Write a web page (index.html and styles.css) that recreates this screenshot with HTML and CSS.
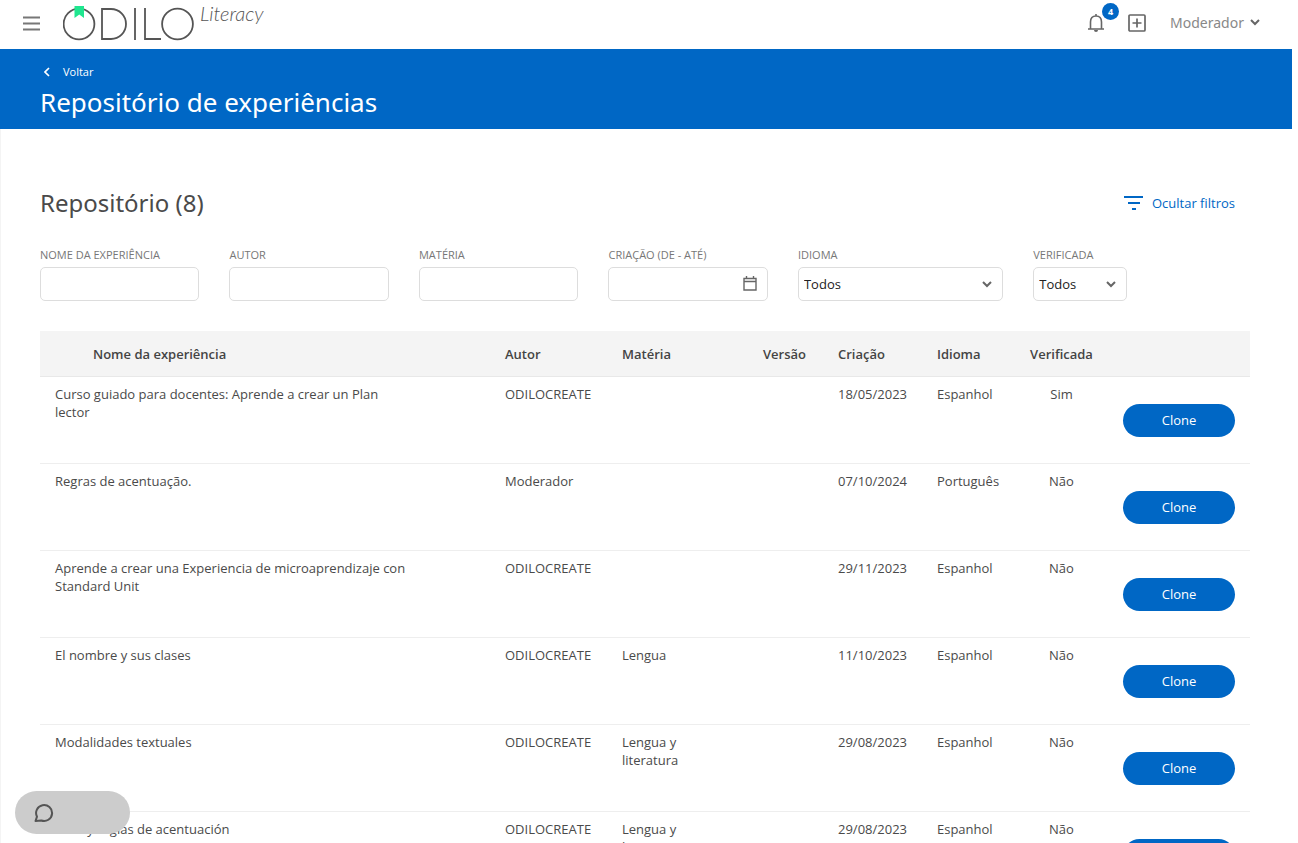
FILE: index.html
```html
<!DOCTYPE html>
<html lang="pt">
<head>
    <meta charset="UTF-8">
    <meta name="viewport" content="width=device-width, initial-scale=1.0">
    <title>Repositório de experiências</title>
    <link rel="stylesheet" href="styles.css">
</head>
<body>
    <div class="page">
        <header class="topbar">
            <button class="icon-btn menu-btn" type="button" aria-label="Menu">
                <svg width="18" height="16" viewBox="0 0 18 16" fill="none" stroke="#777" stroke-width="1.800"><path d="M1 2.500h17M1 8.500h17M1 14.500h17"/></svg>
            </button>
            <a class="logo" href="#" aria-label="Odilo Literacy">
                <svg width="132" height="38" viewBox="0 0 132 38" fill="none" stroke="#555" stroke-width="1.800">
                    <circle cx="16" cy="20" r="15.400"/>
                    <path d="M39 5h9a15 15 0 0 1 0 30h-9z"/>
                    <path d="M72 4v32M82 4v31h16"/>
                    <circle cx="114.500" cy="20" r="15.400"/>
                    <path d="M11.500 2h9.500v12l-4.700-3.500-4.800 3.500z" fill="#1fe68f" stroke="none"/>
                </svg>
                <span class="logo-text">Literacy</span>
            </a>
            <div class="topbar-right">
                <button class="icon-btn bell-btn" type="button" aria-label="Notificações">
                    <svg width="18" height="20" viewBox="0 0 18 20" fill="none" stroke="#666" stroke-width="1.600"><path d="M1 16h16M3.500 16V9c0-3.500 2-6 5.500-6s5.500 2.500 5.500 6v7M9 3V1"/><path d="M7 17a2 2 0 0 0 4 0z" fill="#666" stroke="none"/></svg>
                    <span class="badge">4</span>
                </button>
                <button class="icon-btn add-btn" type="button" aria-label="Adicionar">
                    <svg width="18" height="18" viewBox="0 0 18 18" fill="none" stroke="#666" stroke-width="1.700"><rect x="1" y="1" width="16" height="16" rx="1"/><path d="M9 4.500v9M4.500 9h9"/></svg>
                </button>
                <button class="user-btn" type="button">
                    Moderador
                    <svg width="10" height="7" viewBox="0 0 10 7" fill="none" stroke="#666" stroke-width="2"><path d="M1 1l4 4 4-4"/></svg>
                </button>
            </div>
        </header>

        <div class="banner">
            <a class="back" href="#">
                <svg width="6" height="10" viewBox="0 0 6 10" fill="none" stroke="#fff" stroke-width="1.700"><path d="M5 1L1 5l4 4"/></svg>
                Voltar
            </a>
            <h1>Repositório de experiências</h1>
        </div>

        <main class="content">
            <div class="content-header">
                <h2>Repositório (8)</h2>
                <button class="filter-toggle" type="button">
                    <svg width="19" height="14" viewBox="0 0 19 14" fill="none" stroke="#0067c5" stroke-width="2"><path d="M0 1h19M4 7h12M8 13h4"/></svg>
                    Ocultar filtros
                </button>
            </div>

            <form class="filters">
                <div class="field">
                    <label for="nome">Nome da experiência</label>
                    <input id="nome" type="text">
                </div>
                <div class="field">
                    <label for="autor">Autor</label>
                    <input id="autor" type="text">
                </div>
                <div class="field">
                    <label for="materia">Matéria</label>
                    <input id="materia" type="text">
                </div>
                <div class="field">
                    <label for="criacao">Criação (de - até)</label>
                    <div class="control">
                        <input id="criacao" type="text">
                        <svg class="calendar" width="14" height="15" viewBox="0 0 14 15" fill="none" stroke="#666" stroke-width="1.400"><path d="M1 2.500h12v11.500H1zM1 5.500h12M3.500 0v2M10.500 0v2"/></svg>
                    </div>
                </div>
                <div class="field">
                    <label for="idioma">Idioma</label>
                    <div class="control">
                        <select id="idioma"><option>Todos</option></select>
                        <svg class="arrow" width="10" height="7" viewBox="0 0 10 7" fill="none" stroke="#666" stroke-width="2"><path d="M1 1l4 4 4-4"/></svg>
                    </div>
                </div>
                <div class="field">
                    <label for="verificada">Verificada</label>
                    <div class="control">
                        <select id="verificada"><option>Todos</option></select>
                        <svg class="arrow" width="10" height="7" viewBox="0 0 10 7" fill="none" stroke="#666" stroke-width="2"><path d="M1 1l4 4 4-4"/></svg>
                    </div>
                </div>
            </form>

            <table class="experiences">
                <colgroup>
                    <col>
                    <col class="col-author">
                    <col class="col-subject">
                    <col class="col-version">
                    <col class="col-date">
                    <col class="col-language">
                    <col class="col-verified">
                    <col class="col-action">
                </colgroup>
                <thead>
                    <tr>
                        <th class="name">Nome da experiência</th>
                        <th>Autor</th>
                        <th>Matéria</th>
                        <th>Versão</th>
                        <th>Criação</th>
                        <th>Idioma</th>
                        <th class="verified">Verificada</th>
                        <th></th>
                    </tr>
                </thead>
                <tbody>
                    <tr>
                        <td class="name">Curso guiado para docentes: Aprende a crear un Plan lector</td>
                        <td>ODILOCREATE</td>
                        <td></td>
                        <td></td>
                        <td>18/05/2023</td>
                        <td>Espanhol</td>
                        <td class="verified">Sim</td>
                        <td class="action"><button class="btn" type="button">Clone</button></td>
                    </tr>
                    <tr>
                        <td class="name">Regras de acentuação.</td>
                        <td>Moderador</td>
                        <td></td>
                        <td></td>
                        <td>07/10/2024</td>
                        <td>Português</td>
                        <td class="verified">Não</td>
                        <td class="action"><button class="btn" type="button">Clone</button></td>
                    </tr>
                    <tr>
                        <td class="name">Aprende a crear una Experiencia de microaprendizaje con Standard Unit</td>
                        <td>ODILOCREATE</td>
                        <td></td>
                        <td></td>
                        <td>29/11/2023</td>
                        <td>Espanhol</td>
                        <td class="verified">Não</td>
                        <td class="action"><button class="btn" type="button">Clone</button></td>
                    </tr>
                    <tr>
                        <td class="name">El nombre y sus clases</td>
                        <td>ODILOCREATE</td>
                        <td>Lengua</td>
                        <td></td>
                        <td>11/10/2023</td>
                        <td>Espanhol</td>
                        <td class="verified">Não</td>
                        <td class="action"><button class="btn" type="button">Clone</button></td>
                    </tr>
                    <tr>
                        <td class="name">Modalidades textuales</td>
                        <td>ODILOCREATE</td>
                        <td>Lengua y literatura</td>
                        <td></td>
                        <td>29/08/2023</td>
                        <td>Espanhol</td>
                        <td class="verified">Não</td>
                        <td class="action"><button class="btn" type="button">Clone</button></td>
                    </tr>
                    <tr>
                        <td class="name">Tilde y reglas de acentuación</td>
                        <td>ODILOCREATE</td>
                        <td>Lengua y literatura</td>
                        <td></td>
                        <td>29/08/2023</td>
                        <td>Espanhol</td>
                        <td class="verified">Não</td>
                        <td class="action"><button class="btn" type="button">Clone</button></td>
                    </tr>
                </tbody>
            </table>
        </main>
    </div>

    <button class="chat-btn" type="button" aria-label="Chat">
        <svg width="20" height="20" viewBox="0 0 20 20" fill="none" stroke="#555" stroke-width="2"><path d="M1.500 18l1.500-4.300a8 8 0 1 1 4.300 3.800z" stroke-linejoin="round"/></svg>
    </button>
</body>
</html>
```
FILE: styles.css
```css
/* Base styles */
* {
    box-sizing: border-box;
}

body {
    font-family: 'Open Sans', 'Noto Sans', sans-serif;
    font-size: 13px;
    line-height: 18px;
    color: #4a4a4a;
    background-color: #fff;
    margin: 0;
}

button, input, select {
    font-family: inherit;
    font-size: inherit;
}

button {
    border: none;
    background: none;
    padding: 0;
    cursor: pointer;
}

a {
    text-decoration: none;
}

svg {
    display: block;
}

.page {
    height: 100vh;
    overflow: hidden;
    margin-right: 6px;
}

/* Top bar */
.topbar {
    display: flex;
    align-items: center;
    height: 49px;
    padding: 0 32px 4px 22px;
}

.logo {
    display: flex;
    align-items: flex-start;
    gap: 5px;
    margin-left: 23px;
}

.logo-text {
    font-family: Lato, sans-serif;
    font-size: 20px;
    font-style: italic;
    font-weight: 300;
    color: #555;
}

.topbar-right {
    display: flex;
    align-items: center;
    margin-left: auto;
}

.bell-btn {
    position: relative;
}

.badge {
    position: absolute;
    top: -10px;
    right: -14px;
    width: 17px;
    height: 17px;
    border-radius: 50%;
    background-color: #0067c5;
    color: #fff;
    font-size: 9px;
    font-weight: 700;
    line-height: 17px;
}

.add-btn {
    margin-left: 23px;
}

.user-btn {
    display: flex;
    align-items: center;
    gap: 6px;
    margin-left: 24px;
    font-family: 'Noto Sans', sans-serif;
    font-size: 14px;
    color: #888;
}

/* Banner */
.banner {
    height: 80px;
    padding: 14px 40px 0;
    background-color: #0067c5;
    color: #fff;
}

.back {
    display: inline-flex;
    align-items: center;
    gap: 13px;
    padding-left: 4px;
    font-size: 11px;
    font-weight: 500;
    color: #fff;
}

.banner h1 {
    margin: 3px 0 0;
    font-family: 'Noto Sans', sans-serif;
    font-size: 26px;
    font-weight: 400;
    line-height: 36px;
}

/* Content */
.content {
    padding: 56px 42px 0 39px;
    border-left: 1px solid #f4f4f4;
}

.content-header {
    display: flex;
    align-items: center;
    justify-content: space-between;
    padding-right: 15px;
}

.content-header h2 {
    margin: 0;
    font-family: 'Noto Sans', sans-serif;
    font-size: 24px;
    font-weight: 400;
    line-height: 36px;
}

.filter-toggle {
    display: flex;
    align-items: center;
    gap: 9px;
    color: #0067c5;
}

/* Filters */
.filters {
    display: grid;
    grid-template-columns: repeat(4, 160fr) 206fr 94fr;
    gap: 30px;
    margin: 25px 0 30px;
    padding-right: 123px;
}

.field label {
    display: block;
    margin-bottom: 3px;
    font-size: 11px;
    text-transform: uppercase;
    color: #777;
}

.field input, .field select {
    display: block;
    width: 100%;
    height: 34px;
    padding: 0 5px;
    border: 1px solid #ddd;
    border-radius: 5px;
    background-color: #fff;
    color: #222;
}

.field select {
    appearance: none;
}

.control {
    position: relative;
}

.arrow, .calendar {
    position: absolute;
    top: 14px;
    right: 11px;
    pointer-events: none;
}

.calendar {
    top: 9px;
}

/* Table */
.experiences {
    width: 100%;
    table-layout: fixed;
    border-collapse: collapse;
}

.col-author { width: 117px; }
.col-subject { width: 141px; }
.col-version { width: 75px; }
.col-date { width: 99px; }
.col-language { width: 93px; }
.col-verified { width: 93px; }
.col-action { width: 142px; }

.experiences th {
    height: 45px;
    padding: 2px 15px 0;
    border-bottom: 1px solid #e8e8e8;
    background-color: #f4f4f4;
    font-weight: 600;
    text-align: left;
    color: #444;
}

.experiences th.name {
    padding-left: 53px;
}

.experiences td {
    height: 87px;
    padding: 8px 15px;
    border-bottom: 1px solid #eee;
    vertical-align: top;
}

.experiences td.name {
    padding-right: 75px;
}

.experiences .verified {
    padding-left: 0;
    padding-right: 0;
    text-align: center;
}

.experiences td.action {
    padding-top: 27px;
}

.btn {
    display: block;
    width: 100%;
    height: 33px;
    border-radius: 17px;
    background-color: #0067c5;
    color: #fff;
}

/* Chat */
.chat-btn {
    position: fixed;
    left: 15px;
    bottom: 9px;
    width: 115px;
    height: 43px;
    padding-left: 19px;
    border-radius: 22px;
    background-color: #ccc;
}
```
